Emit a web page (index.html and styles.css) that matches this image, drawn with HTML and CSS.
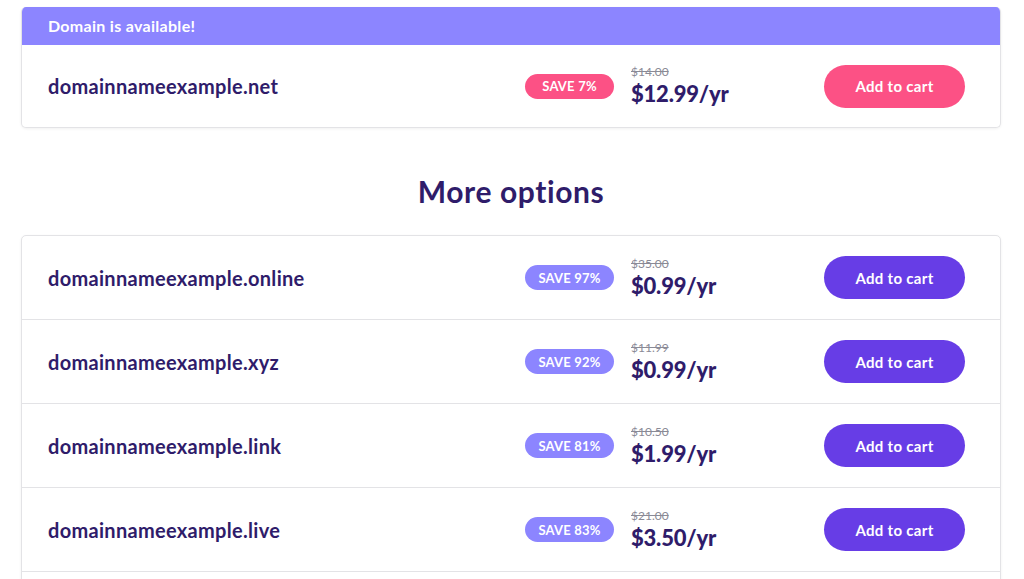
FILE: index.html
```html
<!DOCTYPE html>
<html>
<head>
<meta charset="utf-8">
<link rel="stylesheet" href="styles.css">
</head>
<body>
<div class="page">
  <section class="card available">
    <div class="card-head">Domain is available!</div>
    <div class="row">
      <div class="name">domainnameexample.net</div>
      <span class="badge pink">SAVE 7%</span>
      <div class="price"><span class="old">$14.00</span><span class="new">$12.99/yr</span></div>
      <button class="btn pink">Add to cart</button>
    </div>
  </section>

  <h2 class="title">More options</h2>

  <section class="card list">
    <div class="row">
      <div class="name">domainnameexample.online</div>
      <span class="badge violet">SAVE 97%</span>
      <div class="price"><span class="old">$35.00</span><span class="new">$0.99/yr</span></div>
      <button class="btn purple">Add to cart</button>
    </div>
    <div class="row">
      <div class="name">domainnameexample.xyz</div>
      <span class="badge violet">SAVE 92%</span>
      <div class="price"><span class="old">$11.99</span><span class="new">$0.99/yr</span></div>
      <button class="btn purple">Add to cart</button>
    </div>
    <div class="row">
      <div class="name">domainnameexample.link</div>
      <span class="badge violet">SAVE 81%</span>
      <div class="price"><span class="old">$10.50</span><span class="new">$1.99/yr</span></div>
      <button class="btn purple">Add to cart</button>
    </div>
    <div class="row">
      <div class="name">domainnameexample.live</div>
      <span class="badge violet">SAVE 83%</span>
      <div class="price"><span class="old">$21.00</span><span class="new">$3.50/yr</span></div>
      <button class="btn purple">Add to cart</button>
    </div>
    <div class="row"></div>
  </section>
</div>
</body>
</html>
```
FILE: styles.css
```css
* { box-sizing: border-box; }
html, body { margin: 0; padding: 0; background: #fff; }
body {
  font-family: "Lato", "Noto Sans", sans-serif;
  color: #2f1c6a;
  overflow: hidden;
  height: 579px;
}
.page {
  padding: 7px 23px 0 21px;
}
.card {
  background: #fff;
  border: 1px solid #e3e3e6;
  border-radius: 5px;
  box-shadow: 0 1px 3px rgba(0,0,0,0.06);
  overflow: hidden;
}
.available { border-top: none; }
.card-head {
  background: #8c85ff;
  color: #fff;
  font-weight: 700;
  font-size: 16px;
  letter-spacing: 0.3px;
  height: 38px;
  line-height: 38px;
  padding-left: 26px;
}
.row {
  display: flex;
  align-items: center;
  height: 84px;
  padding: 0 35px 0 26px;
  border-bottom: 1px solid #e3e3e6;
}
.available .row { height: 82px; border-bottom: none; }
.name {
  flex: 1;
  font-size: 20px;
  font-weight: 700;
  letter-spacing: 0.3px;
}
.badge {
  width: 89px;
  height: 25px;
  border-radius: 13px;
  color: #fff;
  font-size: 13px;
  font-weight: 700;
  letter-spacing: 0.2px;
  display: flex;
  align-items: center;
  justify-content: center;
  margin-right: 17px;
}
.badge.pink { background: #fc5185; }
.badge.violet { background: #8c85ff; }
.price {
  width: 193px;
  display: flex;
  flex-direction: column;
}
.old {
  color: #8a8a96;
  font-size: 12px;
  text-decoration: line-through;
  line-height: 14px;
  margin-bottom: 2px;
}
.new {
  font-size: 22px;
  font-weight: 900;
  letter-spacing: -0.2px;
  line-height: 26px;
}
.btn {
  width: 141px;
  height: 43px;
  border: none;
  border-radius: 22px;
  color: #fff;
  font-family: inherit;
  font-size: 15px;
  font-weight: 700;
  letter-spacing: 0.3px;
}
.btn.pink { background: #fc5185; }
.btn.purple { background: #673de6; }
.title {
  text-align: center;
  font-size: 30px;
  font-weight: 700;
  letter-spacing: 0.6px;
  margin: 46px 0 27px;
  line-height: 34px;
}
```
